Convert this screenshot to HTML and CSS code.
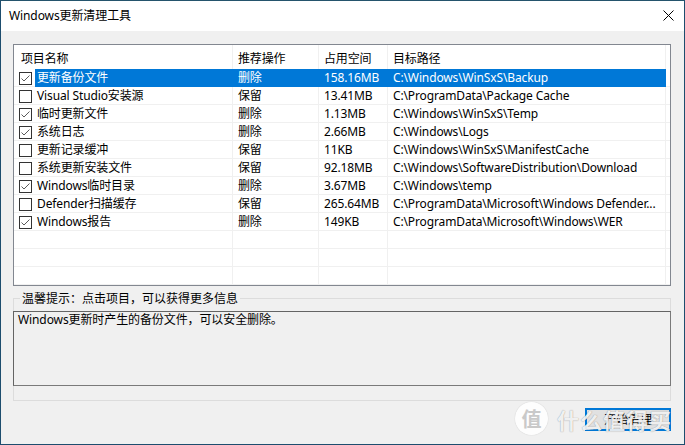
FILE: index.html
```html
<!DOCTYPE html>
<html lang="zh-CN">
<head>
<meta charset="utf-8">
<title>Windows更新清理工具</title>
<link rel="stylesheet" href="styles.css">
</head>
<body>
<div class="window">
  <div class="titlebar">
    <span class="title">Windows更新清理工具</span>
    <svg class="close" width="11" height="11" viewBox="0 0 11 11"><path d="M0.5 0.5 L10.5 10.5 M10.5 0.5 L0.5 10.5" stroke="#000" stroke-width="1" fill="none"/></svg>
  </div>
  <div class="content">
    <div class="list">
      <div class="row head">
        <div class="cell hname">项目名称</div>
        <div class="cell line">推荐操作</div>
        <div class="cell line">占用空间</div>
        <div class="cell line">目标路径</div>
        <div class="cell"></div>
      </div>
      <div class="row sel">
        <div class="cell cb"><span class="box on"><svg width="11" height="11" viewBox="0 0 11 11"><path d="M1.5 5.5 L4 8 L9.5 2.5" stroke="#5a5a5a" stroke-width="1" fill="none"/></svg></span></div>
        <div class="cell line name">更新备份文件</div>
        <div class="cell line">删除</div>
        <div class="cell line">158.16MB</div>
        <div class="cell line">C:\Windows\WinSxS\Backup</div>
        <div class="cell"></div>
      </div>
      <div class="row">
        <div class="cell cb"><span class="box"></span></div>
        <div class="cell line name">Visual Studio安装源</div>
        <div class="cell line">保留</div>
        <div class="cell line">13.41MB</div>
        <div class="cell line">C:\ProgramData\Package Cache</div>
        <div class="cell"></div>
      </div>
      <div class="row">
        <div class="cell cb"><span class="box on"><svg width="11" height="11" viewBox="0 0 11 11"><path d="M1.5 5.5 L4 8 L9.5 2.5" stroke="#5a5a5a" stroke-width="1" fill="none"/></svg></span></div>
        <div class="cell line name">临时更新文件</div>
        <div class="cell line">删除</div>
        <div class="cell line">1.13MB</div>
        <div class="cell line">C:\Windows\WinSxS\Temp</div>
        <div class="cell"></div>
      </div>
      <div class="row">
        <div class="cell cb"><span class="box on"><svg width="11" height="11" viewBox="0 0 11 11"><path d="M1.5 5.5 L4 8 L9.5 2.5" stroke="#5a5a5a" stroke-width="1" fill="none"/></svg></span></div>
        <div class="cell line name">系统日志</div>
        <div class="cell line">删除</div>
        <div class="cell line">2.66MB</div>
        <div class="cell line">C:\Windows\Logs</div>
        <div class="cell"></div>
      </div>
      <div class="row">
        <div class="cell cb"><span class="box"></span></div>
        <div class="cell line name">更新记录缓冲</div>
        <div class="cell line">保留</div>
        <div class="cell line">11KB</div>
        <div class="cell line">C:\Windows\WinSxS\ManifestCache</div>
        <div class="cell"></div>
      </div>
      <div class="row">
        <div class="cell cb"><span class="box"></span></div>
        <div class="cell line name">系统更新安装文件</div>
        <div class="cell line">保留</div>
        <div class="cell line">92.18MB</div>
        <div class="cell line">C:\Windows\SoftwareDistribution\Download</div>
        <div class="cell"></div>
      </div>
      <div class="row">
        <div class="cell cb"><span class="box on"><svg width="11" height="11" viewBox="0 0 11 11"><path d="M1.5 5.5 L4 8 L9.5 2.5" stroke="#5a5a5a" stroke-width="1" fill="none"/></svg></span></div>
        <div class="cell line name">Windows临时目录</div>
        <div class="cell line">删除</div>
        <div class="cell line">3.67MB</div>
        <div class="cell line">C:\Windows\temp</div>
        <div class="cell"></div>
      </div>
      <div class="row">
        <div class="cell cb"><span class="box"></span></div>
        <div class="cell line name">Defender扫描缓存</div>
        <div class="cell line">保留</div>
        <div class="cell line">265.64MB</div>
        <div class="cell line">C:\ProgramData\Microsoft\Windows Defender...</div>
        <div class="cell"></div>
      </div>
      <div class="row">
        <div class="cell cb"><span class="box on"><svg width="11" height="11" viewBox="0 0 11 11"><path d="M1.5 5.5 L4 8 L9.5 2.5" stroke="#5a5a5a" stroke-width="1" fill="none"/></svg></span></div>
        <div class="cell line name">Windows报告</div>
        <div class="cell line">删除</div>
        <div class="cell line">149KB</div>
        <div class="cell line">C:\ProgramData\Microsoft\Windows\WER</div>
        <div class="cell"></div>
      </div>
      <div class="row"><div class="cell cb"></div><div class="cell line"></div><div class="cell line"></div><div class="cell line"></div><div class="cell line"></div><div class="cell"></div></div>
      <div class="row"><div class="cell cb"></div><div class="cell line"></div><div class="cell line"></div><div class="cell line"></div><div class="cell line"></div><div class="cell"></div></div>
      <div class="row"><div class="cell cb"></div><div class="cell line"></div><div class="cell line"></div><div class="cell line"></div><div class="cell line"></div><div class="cell"></div></div>
    </div>
    <fieldset class="group">
      <legend>温馨提示：点击项目，可以获得更多信息</legend>
      <div class="desc">Windows更新时产生的备份文件，可以安全删除。</div>
    </fieldset>
    <div class="footer">
      <button class="btn">开始清理</button>
    </div>
  </div>
  <div class="watermark">
    <span class="wm-logo">值</span>
    <span class="wm-text">什么值得买</span>
  </div>
</div>
</body>
</html>
```
FILE: styles.css
```css
html, body {
  margin: 0;
  padding: 0;
}
body {
  width: 685px;
  height: 445px;
  overflow: hidden;
  font-family: "Noto Sans", "Noto Sans CJK SC", sans-serif;
  font-size: 12px;
  color: #000;
  background: #f0f0f0;
}
.window {
  position: relative;
  box-sizing: border-box;
  width: 685px;
  height: 445px;
  border: 1px solid #1d4d6e;
  border-top-color: #24546c;
  background: #f0f0f0;
  display: flex;
  flex-direction: column;
}
.titlebar {
  height: 30px;
  flex: none;
  background: #fff;
  display: flex;
  align-items: center;
  justify-content: space-between;
  padding: 0 10px 0 8px;
}
.title {
  font-size: 12px;
  line-height: 16px;
  letter-spacing: -0.1px;
}
.close {
  display: block;
  margin-top: -1px;
}
.content {
  flex: 1;
  display: flex;
  flex-direction: column;
  padding: 13px 13px 0 12px;
}
.list {
  box-sizing: border-box;
  height: 242px;
  border: 1px solid #828790;
  background: #fff;
  overflow: hidden;
  letter-spacing: -0.13px;
}
.row {
  display: grid;
  grid-template-columns: 21px 198px 86px 69px 278px 4px;
  height: 18px;
}
.row.head {
  height: 24px;
}
.cell {
  box-sizing: border-box;
  border-bottom: 1px solid #f0f0f0;
  padding-left: 5px;
  padding-top: 1px;
  line-height: 16px;
  white-space: nowrap;
  overflow: hidden;
}
.cell.line {
  border-right: 1px solid #f0f0f0;
}
.head .cell {
  border-bottom: none;
  line-height: 24px;
  padding-top: 2px;
}
.head .hname {
  grid-column: span 2;
  padding-left: 7px;
  border-right: 1px solid #f0f0f0;
}
.cell.cb {
  padding-left: 5px;
  padding-top: 3px;
}
.cell.name {
  padding-left: 2px;
}
.box {
  display: block;
  box-sizing: border-box;
  width: 13px;
  height: 13px;
  border: 1px solid #333;
  background: #fff;
}
.box svg {
  display: block;
}
.sel .cell.line {
  background: #0078d7;
  color: #fff;
  border-color: #0078d7;
}
.group {
  margin: 4px 0 0 0;
  padding: 0;
  min-width: 0;
  border: 1px solid #dcdcdc;
}
.group legend {
  margin-left: 6px;
  padding: 0 2px;
  line-height: 16px;
  font-size: 12px;
  position: relative;
  top: 1px;
}
.desc {
  box-sizing: border-box;
  height: 75px;
  margin: 5px -1px 14px -1px;
  border: 1px solid #7a7a7a;
  border-top-color: #646464;
  border-left-color: #646464;
  padding: 0 4px;
  line-height: 16px;
  background: #f0f0f0;
  letter-spacing: -0.1px;
}
.footer {
  display: flex;
  justify-content: flex-end;
  margin-top: 7px;
}
.btn {
  box-sizing: border-box;
  width: 86px;
  height: 23px;
  border: 2px solid #0078d7;
  background: #e1e1e1;
  font-family: "Noto Sans", "Noto Sans CJK SC", sans-serif;
  font-size: 12px;
  color: #000;
  padding: 0;
  line-height: 17px;
}
.watermark {
  position: absolute;
  left: 514px;
  top: 401px;
  display: flex;
  align-items: center;
  gap: 9px;
  pointer-events: none;
}
.wm-logo {
  display: flex;
  align-items: center;
  justify-content: center;
  width: 33px;
  height: 33px;
  border-radius: 50%;
  background: rgba(255, 255, 255, 0.85);
  box-shadow: 0 0 1px rgba(0, 0, 0, 0.25);
  color: #c9c9c9;
  font-family: "Noto Sans CJK SC", sans-serif;
  font-size: 20px;
  font-weight: 700;
}
.wm-text {
  font-family: "Noto Sans CJK SC", sans-serif;
  font-size: 22px;
  font-weight: 700;
  line-height: 26px;
  letter-spacing: 1px;
  color: rgba(255, 255, 255, 0.88);
  text-shadow: 0 0 1px rgba(0, 0, 0, 0.45);
}
```
